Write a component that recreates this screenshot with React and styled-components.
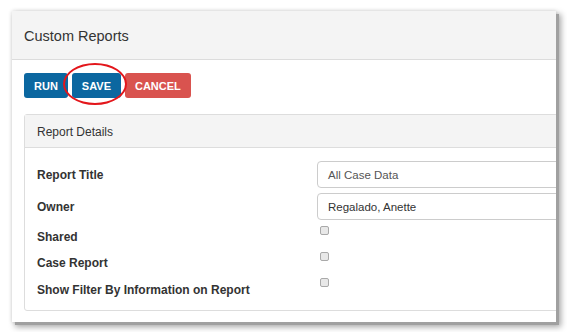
import React from 'react';
import styled, { createGlobalStyle } from 'styled-components';

// styles
const Global = createGlobalStyle`
  body {
    margin: 0;
    background: #fff;
    font-family: "Liberation Sans", Arial, sans-serif;
    color: #333;
  }
`;

const Page = styled.div`
  padding: 11px 11px 10px 12px;
`;

const Frame = styled.div`
  width: 544px;
  height: 311px;
  background: #fff;
  overflow: hidden;
  box-shadow: 3px 3px 0 0 #a0a0a0, 4px 4px 6px 1px rgba(0, 0, 0, 0.35), 0 0 4px rgba(0, 0, 0, 0.15);
`;

const Header = styled.div`
  height: 49px;
  box-sizing: border-box;
  padding: 2px 0 0 12px;
  background: #f4f4f4;
  border-bottom: 1px solid #dcdcdc;
  display: flex;
  align-items: center;
  font-size: 14.5px;
  color: #333;
`;

const Body = styled.div`
  padding: 13px 0 0 12px;
`;

const Toolbar = styled.div`
  display: flex;
  gap: 4px;
  margin-bottom: 16px;
`;

const Button = styled.button`
  height: 25px;
  padding: 0 10px;
  border: none;
  border-radius: 3px;
  background: ${(p) => (p.$danger ? '#d9534f' : '#0b67a0')};
  color: #fff;
  font-family: "Liberation Sans", Arial, sans-serif;
  font-weight: bold;
  font-size: 11px;
  cursor: pointer;
`;

const Circled = styled.span`
  position: relative;
  display: inline-flex;
`;

const Ellipse = styled.span`
  position: absolute;
  left: -9px;
  top: -10px;
  width: 60px;
  height: 38px;
  border: 2px solid #e3161b;
  border-radius: 50%;
  pointer-events: none;
`;

const Panel = styled.div`
  width: 560px;
  border: 1px solid #dddddd;
  border-radius: 3px;
`;

const PanelHeader = styled.div`
  height: 33px;
  box-sizing: border-box;
  padding: 2px 0 0 12px;
  background: #f4f4f4;
  border-bottom: 1px solid #dddddd;
  display: flex;
  align-items: center;
  font-size: 12px;
  color: #333;
`;

const Form = styled.div`
  display: grid;
  grid-template-columns: 280px 1fr;
  padding: 13px 0 7px 12px;
`;

const Label = styled.div`
  height: ${(p) => p.$h}px;
  margin-top: ${(p) => p.$mt || 0}px;
  display: flex;
  align-items: center;
  font-size: 12px;
  font-weight: bold;
  color: #333;
`;

const Cell = styled.div`
  height: ${(p) => p.$h}px;
  margin-top: ${(p) => p.$mt || 0}px;
`;

const TextBox = styled.div`
  height: 100%;
  box-sizing: border-box;
  border: 1px solid #cccccc;
  border-radius: 4px;
  display: flex;
  align-items: center;
  padding-left: 10px;
  font-size: 11.5px;
  color: ${(p) => (p.$muted ? '#555' : '#333')};
`;

const Check = styled.input.attrs({ type: 'checkbox' })`
  appearance: none;
  display: block;
  width: 9px;
  height: 9px;
  margin: 2px 0 0 3px;
  border: 1px solid #a9a9a9;
  border-radius: 2px;
  background: #e8e8e8;
  box-sizing: border-box;
`;

const App = () => {
  return (
    <Page>
      <Global />
      <Frame>
        <Header>Custom Reports</Header>
        <Body>
          <Toolbar>
            <Button>RUN</Button>
            <Circled>
              <Button>SAVE</Button>
              <Ellipse />
            </Circled>
            <Button $danger>CANCEL</Button>
          </Toolbar>
          <Panel>
            <PanelHeader>Report Details</PanelHeader>
            <Form>
              <Label $h={27}>Report Title</Label>
              <Cell $h={27}>
                <TextBox $muted>All Case Data</TextBox>
              </Cell>
              <Label $h={27} $mt={5}>Owner</Label>
              <Cell $h={27} $mt={5}>
                <TextBox>Regalado, Anette</TextBox>
              </Cell>
              <Label $h={26} $mt={4}>Shared</Label>
              <Cell $h={26} $mt={4}><Check /></Cell>
              <Label $h={26}>Case Report</Label>
              <Cell $h={26}><Check /></Cell>
              <Label $h={27}>Show Filter By Information on Report</Label>
              <Cell $h={27}><Check /></Cell>
            </Form>
          </Panel>
        </Body>
      </Frame>
    </Page>
  );
};

export default App;
